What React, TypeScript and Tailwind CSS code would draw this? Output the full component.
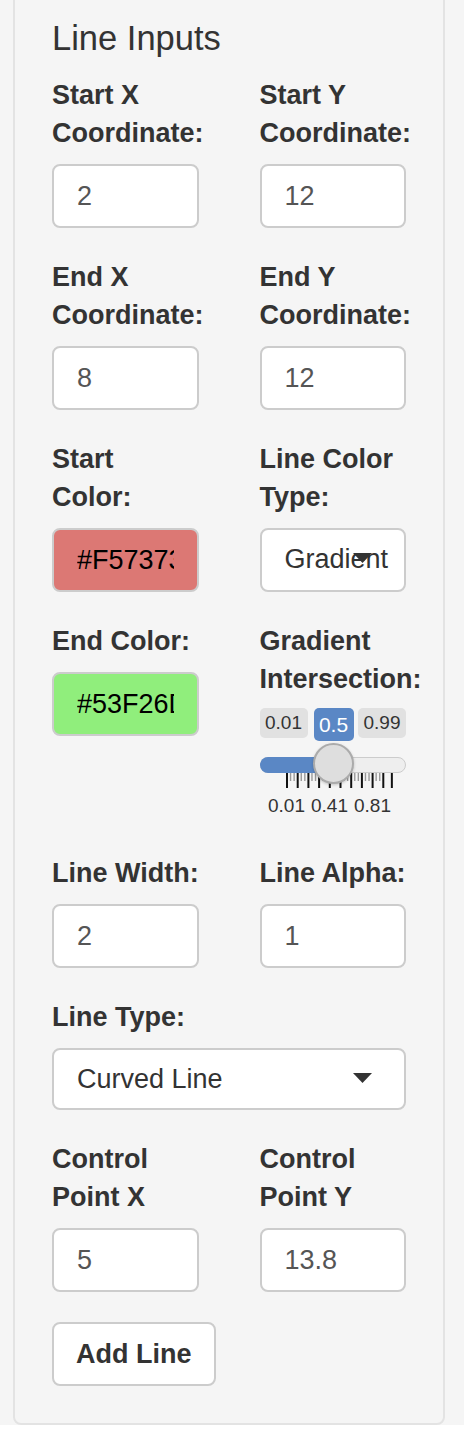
import React from 'react';

const labelCls = 'block text-[27px] leading-[38px] font-bold text-[#333333] mb-[12px]';
const inputCls =
  'block w-full h-[64px] rounded-[8px] border-2 border-[#cccccc] bg-white px-[23px] text-[27px] text-[#555555] outline-none';

function Field({ label, value, nowrap }: { label: string; value: string; nowrap?: boolean }) {
  return (
    <div>
      <label className={labelCls + (nowrap ? ' whitespace-nowrap' : '')}>{label}</label>
      <input className={inputCls} value={value} readOnly />
    </div>
  );
}

function ColorField({ label, value, bg }: { label: string; value: string; bg: string }) {
  return (
    <div>
      <label className={labelCls}>{label}</label>
      <input
        className={'block w-full h-[64px] rounded-[8px] border-2 border-[#cccccc] px-[23px] text-[27px] text-black outline-none ' + bg}
        value={value}
        readOnly
      />
    </div>
  );
}

function Caret() {
  return (
    <svg className="absolute right-[32px] top-[23px]" width="19" height="10" viewBox="0 0 19 10">
      <polygon points="0,0 19,0 9.5,10" fill="#333333" />
    </svg>
  );
}

function SelectBox({ value, h = 'h-[64px]' }: { value: string; h?: string }) {
  return (
    <div className={'relative overflow-hidden rounded-[8px] border-2 border-[#cccccc] bg-white px-[23px] ' + h}>
      <span className="block text-[27px] leading-[58px] text-[#333333] whitespace-nowrap">{value}</span>
      <Caret />
    </div>
  );
}

function Slider() {
  const start = 27;
  const step = 10.7;
  const majors: number[] = [];
  for (let k = 0; k <= 9; k++) majors.push(start + step * k);
  majors.push(start + step * 9.8);
  const minors: number[] = [];
  for (let k = 0; k < 9; k++) {
    minors.push(start + step * k + step / 3);
    minors.push(start + step * k + (2 * step) / 3);
  }

  return (
    <div className="relative h-[114px] w-full">
      {/* min / value / max badges */}
      <div className="absolute left-0 top-[-2px] h-[30px] w-[48px] rounded-[5px] bg-[#e1e1e1] text-center text-[19px] leading-[30px] text-[#333333]">
        0.01
      </div>
      <div className="absolute left-[54px] top-[-2px] h-[33px] w-[40px] rounded-[5px] bg-[#5a87c5] text-center text-[21px] leading-[33px] text-white">
        0.5
      </div>
      <div className="absolute right-0 top-[-2px] h-[30px] w-[48px] rounded-[5px] bg-[#e1e1e1] text-center text-[19px] leading-[30px] text-[#333333]">
        0.99
      </div>

      {/* track */}
      <div className="absolute left-0 right-0 top-[47px] h-[16px] rounded-full border border-[#cccccc] bg-[#eeeeee]" />
      <div className="absolute left-0 top-[47px] h-[16px] w-[74px] rounded-l-full bg-[#5a87c5]" />

      {/* ticks */}
      <svg className="absolute left-0 top-[63px]" width="147" height="17" viewBox="0 0 147 17">
        {minors.map((x, i) => (
          <line key={'m' + i} x1={x} y1={0} x2={x} y2={8} stroke="#999999" strokeWidth={1.4} />
        ))}
        {majors.map((x, i) => (
          <line key={'M' + i} x1={x} y1={0} x2={x} y2={15} stroke="#111111" strokeWidth={2} />
        ))}
      </svg>

      {/* handle */}
      <div className="absolute left-[53px] top-[33px] h-[41px] w-[41px] rounded-full border-2 border-[#ababab] bg-[#dedede] shadow-[0_1px_3px_rgba(0,0,0,0.2)]" />

      {/* grid labels */}
      <div className="absolute left-[5px] top-[85px] w-[44px] text-center text-[19px] leading-[22px] text-[#333333]">0.01</div>
      <div className="absolute left-[48px] top-[85px] w-[44px] text-center text-[19px] leading-[22px] text-[#333333]">0.41</div>
      <div className="absolute left-[91px] top-[85px] w-[44px] text-center text-[19px] leading-[22px] text-[#333333]">0.81</div>
    </div>
  );
}

export default function App() {
  return (
    <div className="min-h-screen bg-[#f5f5f5] pl-[13px] [font-family:'Liberation_Sans',Arial,sans-serif]">
      <div className="-mt-[39px] w-[432px] rounded-[8px] border-2 border-[#e3e3e3] bg-[#f5f5f5] px-[37px] pt-[37px] pb-[37px]">
        <h4 className="mt-[19px] mb-[19px] text-[34.5px] leading-[38px] font-normal text-[#333333]">Line Inputs</h4>

        <div className="grid grid-cols-2 items-start gap-x-[61px] gap-y-[30px]">
          <Field label="Start X Coordinate:" value="2" />
          <Field label="Start Y Coordinate:" value="12" />

          <Field label="End X Coordinate:" value="8" />
          <Field label="End Y Coordinate:" value="12" />

          <ColorField label="Start Color:" value="#F57373" bg="bg-[#dc7874]" />
          <div>
            <label className={labelCls}>Line Color Type:</label>
            <SelectBox value="Gradient" />
          </div>

          <ColorField label="End Color:" value="#53F26D" bg="bg-[#90ee7c]" />
          <div>
            <label className={labelCls + ' whitespace-nowrap'}>
              Gradient
              <br />
              Intersection:
            </label>
            <Slider />
          </div>

          <Field label="Line Width:" value="2" nowrap />
          <Field label="Line Alpha:" value="1" nowrap />

          <div className="col-span-2">
            <label className={labelCls}>Line Type:</label>
            <SelectBox value="Curved Line" h="h-[62px]" />
          </div>

          <Field label="Control Point X" value="5" />
          <Field label="Control Point Y" value="13.8" />
        </div>

        <button className="mt-[30px] inline-flex h-[64px] items-center rounded-[8px] border-2 border-[#cccccc] bg-white px-[22px] text-[27px] font-bold text-[#333333]">
          Add Line
        </button>
      </div>
    </div>
  );
}
